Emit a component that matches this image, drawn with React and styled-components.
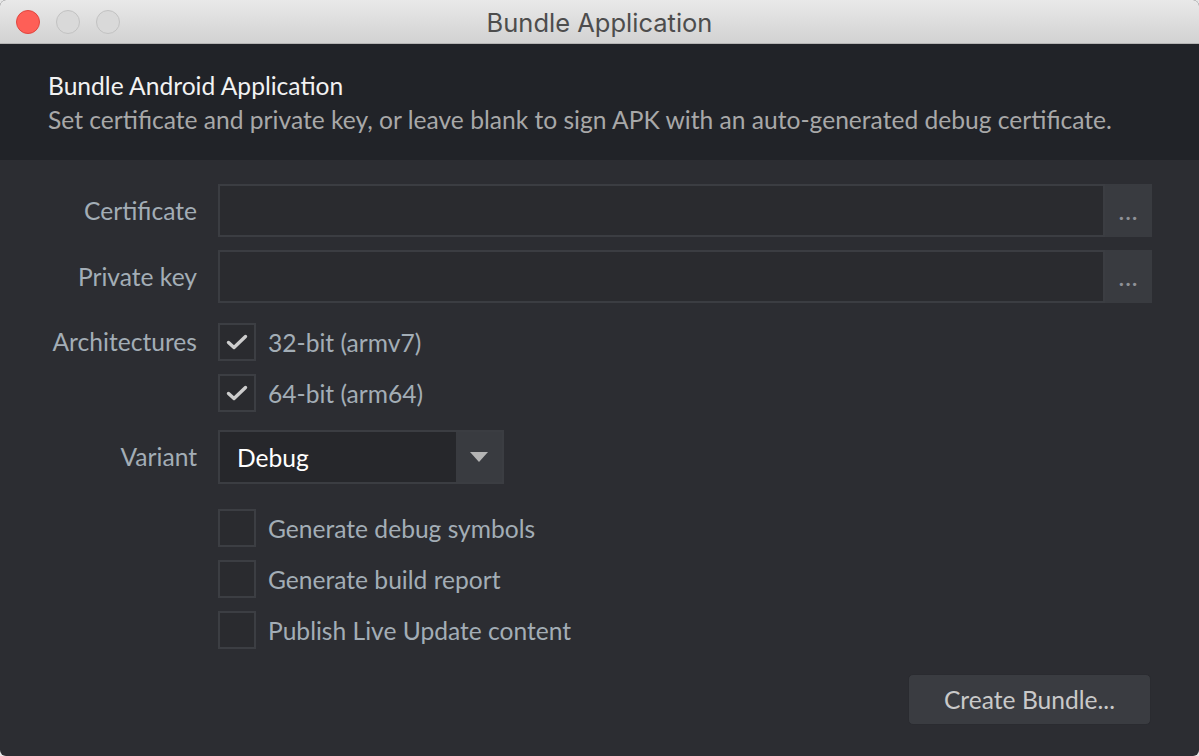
import React from 'react'
import styled, { createGlobalStyle } from 'styled-components'

const GlobalStyle = createGlobalStyle`
  html, body {
    margin: 0;
    padding: 0;
    background: #e6e6e6;
  }
  * { box-sizing: border-box; }
`

const FONT = `'Lato', 'Noto Sans', sans-serif`

const CheckIcon = () => (
  <svg width="24" height="24" viewBox="0 0 24 24">
    <path d="M3.5 12.5 L9 17.5 L20.5 6.5" fill="none" stroke="#cdcdcd" strokeWidth="3.4" strokeLinecap="round" strokeLinejoin="round" />
  </svg>
)

const Checkbox = ({ checked, label }) => (
  <CheckRow>
    <CheckBox>{checked && <CheckIcon />}</CheckBox>
    <CheckLabel>{label}</CheckLabel>
  </CheckRow>
)

const App = () => {
  return (
    <Window>
      <GlobalStyle />
      <TitleBar>
        <Lights>
          <Light color="#fe5f57" border="#e1463f" />
          <Light color="#d9d9d9" border="#c2c2c2" />
          <Light color="#d9d9d9" border="#c2c2c2" />
        </Lights>
        <WindowTitle>Bundle Application</WindowTitle>
      </TitleBar>
      <Header>
        <HeaderTitle>Bundle Android Application</HeaderTitle>
        <HeaderText>Set certificate and private key, or leave blank to sign APK with an auto-generated debug certificate.</HeaderText>
      </Header>
      <Body>
        <Row gap={13}>
          <Label>Certificate</Label>
          <Field>
            <Input />
            <Browse>&middot;&middot;&middot;</Browse>
          </Field>
        </Row>
        <Row gap={19}>
          <Label>Private key</Label>
          <Field>
            <Input />
            <Browse>&middot;&middot;&middot;</Browse>
          </Field>
        </Row>
        <Row gap={18}>
          <Label small>Architectures</Label>
          <Checks>
            <Checkbox checked label="32-bit (armv7)" />
            <Checkbox checked label="64-bit (arm64)" />
          </Checks>
        </Row>
        <Row gap={24}>
          <Label>Variant</Label>
          <Select>
            <SelectValue>Debug</SelectValue>
            <SelectArrow><Triangle /></SelectArrow>
          </Select>
        </Row>
        <Row gap={25}>
          <span />
          <Checks>
            <Checkbox label="Generate debug symbols" />
            <Checkbox label="Generate build report" />
            <Checkbox label="Publish Live Update content" />
          </Checks>
        </Row>
        <Footer>
          <Button>Create Bundle...</Button>
        </Footer>
      </Body>
    </Window>
  )
}

const Window = styled.div`
  width: 1199px;
  height: 756px;
  display: flex;
  flex-direction: column;
  background: #2c2d32;
  border-radius: 6px;
  overflow: hidden;
  font-family: ${FONT};
`

const TitleBar = styled.div`
  height: 44px;
  flex: none;
  position: relative;
  display: flex;
  align-items: center;
  justify-content: center;
  background: linear-gradient(#e9e9e9, #d2d2d2);
  border-bottom: 1px solid #b4b4b4;
`

const Lights = styled.div`
  position: absolute;
  left: 16px;
  top: 10px;
  display: flex;
  gap: 16px;
`

const Light = styled.span`
  width: 24px;
  height: 24px;
  border-radius: 50%;
  background: ${p => p.color};
  border: 1px solid ${p => p.border};
`

const WindowTitle = styled.div`
  font-family: 'Inter', 'Liberation Sans', sans-serif;
  font-size: 25.5px;
  color: #4d4d4d;
  margin-top: 1px;
`

const Header = styled.div`
  flex: none;
  height: 116px;
  background: #212328;
  padding: 26px 0 0 48px;
`

const HeaderTitle = styled.div`
  font-size: 24.6px;
  line-height: 32px;
  color: #f2f2f2;
`

const HeaderText = styled.div`
  font-size: 24.6px;
  line-height: 32px;
  margin-top: 2px;
  color: #a8a8a8;
`

const Body = styled.div`
  flex: 1;
  display: flex;
  flex-direction: column;
  padding: 24px 47px 0 0;
`

const Row = styled.div`
  display: grid;
  grid-template-columns: 197px 1fr;
  column-gap: 21px;
  align-items: start;
  margin-bottom: ${p => p.gap}px;
`

const Label = styled.div`
  text-align: right;
  font-size: 24.6px;
  line-height: 30px;
  color: #a3adb6;
  padding-top: ${p => (p.small ? 5 : 12)}px;
`

const Field = styled.div`
  display: flex;
  height: 53px;
`

const Input = styled.div`
  flex: 1;
  background: #2a2b2f;
  border: 2px solid #3b3d42;
`

const Browse = styled.div`
  width: 47px;
  background: #393b40;
  color: #8f9197;
  font-size: 22px;
  letter-spacing: 1px;
  display: flex;
  align-items: center;
  justify-content: center;
  padding-top: 11px;
`

const Checks = styled.div`
  display: flex;
  flex-direction: column;
  gap: 12px;
`

const CheckRow = styled.div`
  display: flex;
  align-items: center;
  gap: 12px;
  height: 39px;
`

const CheckBox = styled.div`
  width: 38px;
  height: 38px;
  border: 2px solid #3c3e43;
  background: #2a2b2f;
  display: flex;
  align-items: center;
  justify-content: center;
`

const CheckLabel = styled.span`
  font-size: 24.6px;
  color: #a3adb6;
  padding-top: 1px;
`

const Select = styled.div`
  width: 286px;
  height: 54px;
  display: flex;
  border: 2px solid #3b3d42;
  background: #26272b;
`

const SelectValue = styled.div`
  flex: 1;
  padding-left: 17px;
  display: flex;
  align-items: center;
  font-size: 24.6px;
  color: #ffffff;
`

const SelectArrow = styled.div`
  width: 46px;
  background: #393b40;
  display: flex;
  align-items: center;
  justify-content: center;
`

const Triangle = styled.span`
  width: 0;
  height: 0;
  border-left: 9px solid transparent;
  border-right: 9px solid transparent;
  border-top: 10px solid #b4b4b4;
`

const Footer = styled.div`
  display: flex;
  justify-content: flex-end;
`

const Button = styled.button`
  width: 243px;
  height: 51px;
  border: 1px solid #2a2b30;
  border-radius: 5px;
  background: #3a3c41;
  color: #c9c9c9;
  font-family: ${FONT};
  font-size: 24.6px;
  margin-right: 1px;
`

export default App
